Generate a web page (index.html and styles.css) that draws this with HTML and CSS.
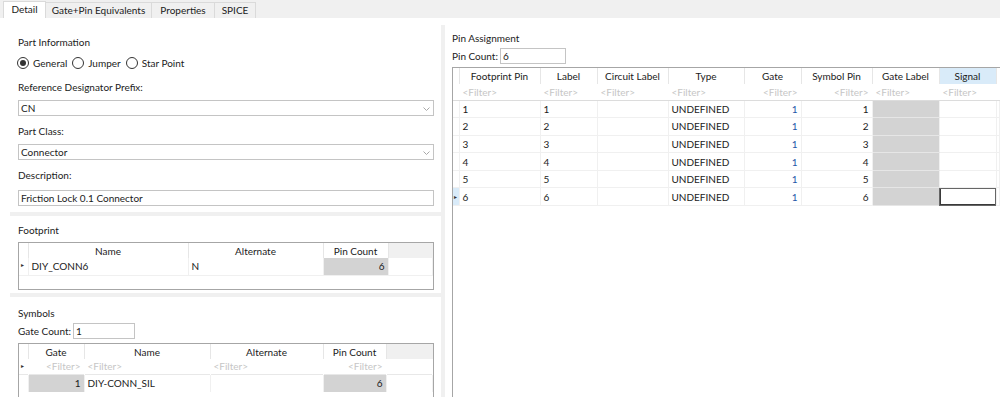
FILE: index.html
```html
<!DOCTYPE html>
<html lang="en">
<head>
    <meta charset="UTF-8">
    <title>Part Editor</title>
    <link rel="stylesheet" href="styles.css">
</head>
<body>
    <div class="tabs">
        <div class="tab tab-detail active">Detail</div>
        <div class="tab tab-equiv">Gate+Pin Equivalents</div>
        <div class="tab tab-props">Properties</div>
        <div class="tab tab-spice">SPICE</div>
    </div>

    <div class="content">
        <div class="left">
            <!-- part information -->
            <section class="group info">
                <div class="caption">Part Information</div>
                <div class="radios">
                    <span class="radio checked"></span><span class="radio-text">General</span>
                    <span class="radio"></span><span class="radio-text">Jumper</span>
                    <span class="radio"></span><span class="radio-text">Star Point</span>
                </div>
                <div class="field-label">Reference Designator Prefix:</div>
                <div class="combo">CN
                    <svg class="chevron" width="7" height="4" viewBox="0 0 7 4"><path d="M0.5 0.5 L3.5 3.5 L6.5 0.5" fill="none" stroke="#a8a8a8" stroke-width="1"/></svg>
                </div>
                <div class="field-label">Part Class:</div>
                <div class="combo">Connector
                    <svg class="chevron" width="7" height="4" viewBox="0 0 7 4"><path d="M0.5 0.5 L3.5 3.5 L6.5 0.5" fill="none" stroke="#a8a8a8" stroke-width="1"/></svg>
                </div>
                <div class="field-label">Description:</div>
                <div class="textbox">Friction Lock 0.1 Connector</div>
            </section>
            <div class="band"></div>

            <!-- footprint -->
            <section class="group footprint">
                <div class="caption">Footprint</div>
                <div class="grid small-grid fp-grid">
                    <table>
                        <colgroup>
                            <col class="c-rh"><col style="width:160px"><col style="width:135px"><col style="width:65px"><col>
                        </colgroup>
                        <tr class="head">
                            <th></th><th>Name</th><th>Alternate</th><th>Pin Count</th><th class="blank"></th>
                        </tr>
                        <tr class="row">
                            <td class="rh"><span class="marker">▸</span></td>
                            <td>DIY_CONN6</td><td>N</td><td class="ro num">6</td><td class="none"></td>
                        </tr>
                    </table>
                </div>
            </section>
            <div class="band"></div>

            <!-- symbols -->
            <section class="group symbols">
                <div class="caption">Symbols</div>
                <div class="count-row">
                    <span>Gate Count:</span>
                    <div class="textbox count-box">1</div>
                </div>
                <div class="grid small-grid sym-grid">
                    <table>
                        <colgroup>
                            <col class="c-rh"><col style="width:56px"><col style="width:126px"><col style="width:113px"><col style="width:63px"><col>
                        </colgroup>
                        <tr class="head">
                            <th></th><th>Gate</th><th>Name</th><th>Alternate</th><th>Pin Count</th><th class="blank"></th>
                        </tr>
                        <tr class="filter">
                            <td class="rh"><span class="marker">▸</span></td>
                            <td class="num">&lt;Filter&gt;</td><td>&lt;Filter&gt;</td><td>&lt;Filter&gt;</td><td class="num">&lt;Filter&gt;</td><td class="none"></td>
                        </tr>
                        <tr class="row">
                            <td class="rh"></td>
                            <td class="ro num">1</td><td>DIY-CONN_SIL</td><td></td><td class="ro num">6</td><td class="none"></td>
                        </tr>
                    </table>
                </div>
            </section>
        </div>

        <div class="splitter"></div>

        <div class="right">
            <div class="caption">Pin Assignment</div>
            <div class="count-row">
                <span>Pin Count:</span>
                <div class="textbox pin-box">6</div>
            </div>
            <div class="grid pin-grid">
                <table>
                    <colgroup>
                        <col style="width:6px"><col style="width:81px"><col style="width:57px"><col style="width:71px"><col style="width:76px"><col style="width:57px"><col style="width:71px"><col style="width:67px"><col style="width:57px"><col>
                    </colgroup>
                    <tr class="head">
                        <th></th><th>Footprint Pin</th><th>Label</th><th>Circuit Label</th><th>Type</th><th>Gate</th><th>Symbol Pin</th><th>Gate Label</th><th class="sorted">Signal</th><th class="none"></th>
                    </tr>
                    <tr class="filter">
                        <td class="rh"></td>
                        <td>&lt;Filter&gt;</td><td>&lt;Filter&gt;</td><td>&lt;Filter&gt;</td><td>&lt;Filter&gt;</td><td class="num">&lt;Filter&gt;</td><td class="num">&lt;Filter&gt;</td><td>&lt;Filter&gt;</td><td>&lt;Filter&gt;</td><td class="none"></td>
                    </tr>
                    <tr class="row">
                        <td class="rh"></td><td>1</td><td>1</td><td></td><td>UNDEFINED</td><td class="num gate">1</td><td class="num">1</td><td class="ro"></td><td></td><td class="none"></td>
                    </tr>
                    <tr class="row">
                        <td class="rh"></td><td>2</td><td>2</td><td></td><td>UNDEFINED</td><td class="num gate">1</td><td class="num">2</td><td class="ro"></td><td></td><td class="none"></td>
                    </tr>
                    <tr class="row">
                        <td class="rh"></td><td>3</td><td>3</td><td></td><td>UNDEFINED</td><td class="num gate">1</td><td class="num">3</td><td class="ro"></td><td></td><td class="none"></td>
                    </tr>
                    <tr class="row">
                        <td class="rh"></td><td>4</td><td>4</td><td></td><td>UNDEFINED</td><td class="num gate">1</td><td class="num">4</td><td class="ro"></td><td></td><td class="none"></td>
                    </tr>
                    <tr class="row">
                        <td class="rh"></td><td>5</td><td>5</td><td></td><td>UNDEFINED</td><td class="num gate">1</td><td class="num">5</td><td class="ro"></td><td></td><td class="none"></td>
                    </tr>
                    <tr class="row">
                        <td class="rh selected"><span class="marker">▸</span></td><td>6</td><td>6</td><td></td><td>UNDEFINED</td><td class="num gate">1</td><td class="num">6</td><td class="ro"></td><td class="current"></td><td class="none"></td>
                    </tr>
                </table>
            </div>
        </div>
    </div>
</body>
</html>
```

FILE: styles.css
```css
* {
    margin: 0;
    padding: 0;
    box-sizing: border-box;
}

body {
    font-family: Lato, "Noto Sans", sans-serif;
    font-size: 10px;
    color: #1b1b1b;
    background: white;
    width: 1000px;
    height: 397px;
    overflow: hidden;
}

/* tab strip */
.tabs {
    display: flex;
    align-items: flex-end;
    height: 18px;
    padding-left: 3px;
    background: #f0f0f0;
}

.tab {
    height: 16px;
    line-height: 15px;
    text-align: center;
    border: 1px solid #dadada;
    border-bottom: none;
    border-left: none;
    background: #f0f0f0;
    white-space: nowrap;
}

.tab.active {
    height: 17px;
    background: white;
    border-left: 1px solid #dadada;
}

.tab-detail { width: 43px; }
.tab-equiv { width: 106px; }
.tab-props { width: 63px; }
.tab-spice { width: 41px; }

/* main split */
.content {
    display: flex;
    height: 379px;
}

.left {
    width: 441px;
    display: flex;
    flex-direction: column;
    overflow: hidden;
}

.splitter {
    width: 4px;
    margin-top: 7px;
    background: #f0f0f0;
}

.right {
    flex: 1;
    padding: 13px 0 0 7px;
    overflow: hidden;
}

.group {
    flex-shrink: 0;
    padding-left: 18px;
    padding-right: 7px;
}

.band {
    flex-shrink: 0;
    height: 4px;
    margin-left: 10px;
    background: #f0f0f0;
}

.caption {
    line-height: 15px;
}

/* part information */
.info {
    padding-top: 17px;
    height: 194px;
}

.radios {
    display: flex;
    align-items: center;
    margin-top: 6px;
    margin-left: -1px;
    height: 13px;
}

.radio {
    width: 12px;
    height: 12px;
    border: 1px solid #333;
    border-radius: 50%;
    margin-right: 4px;
    display: flex;
    align-items: center;
    justify-content: center;
}

.radio.checked::after {
    content: "";
    width: 6px;
    height: 6px;
    border-radius: 50%;
    background: #333;
}

.radio-text {
    margin-right: 5px;
}

.field-label {
    line-height: 15px;
    margin-top: 11px;
}

.combo,
.textbox {
    position: relative;
    height: 16px;
    line-height: 14px;
    margin-top: 5px;
    padding-left: 2px;
    border: 1px solid #c4c4c4;
    background: white;
}

.combo + .field-label,
.textbox + .field-label {
    margin-top: 8px;
}

.info .textbox {
    margin-top: 7px;
}

.chevron {
    position: absolute;
    right: 3px;
    top: 6px;
}

/* footprint */
.footprint {
    height: 77px;
    padding-top: 7px;
}

.symbols {
    flex: 1;
    padding-top: 9px;
}

.count-row {
    display: flex;
    align-items: center;
    margin-top: 2px;
    gap: 2px;
}

.count-row .textbox {
    margin-top: 0;
}

.count-box {
    width: 62px;
}

.pin-box {
    width: 66px;
}

/* grids */
.grid {
    border: 1px solid #a6a6a6;
    overflow: hidden;
    background: white;
}

.grid table {
    border-collapse: collapse;
    table-layout: fixed;
    width: 100%;
}

.grid th,
.grid td {
    height: 15px;
    padding: 0 3px;
    white-space: nowrap;
    overflow: hidden;
    font-weight: normal;
    line-height: 14px;
    text-align: left;
}

.grid th {
    text-align: center;
    border-right: 1px solid #e6e6e6;
    background: white;
}

.grid th.blank {
    background: #f0f0f0;
    border-right: none;
}

.grid th.sorted {
    background: #d9ebf9;
}

.grid th.none,
.grid td.none {
    border: none;
}

.c-rh {
    width: 9px;
}

.grid td.rh {
    padding: 0;
    position: relative;
}

.marker {
    font-size: 6px;
    position: absolute;
    left: 2px;
    top: 4px;
    line-height: 6px;
    color: #333;
}

.grid .filter td {
    color: #c6c6c6;
    height: 16px;
    border-right: 1px solid transparent;
}

.grid td.num {
    text-align: right;
}

.grid td.ro {
    background: #d3d3d3;
}

.fp-grid {
    margin-top: 4px;
    height: 48px;
}

.fp-grid .row td {
    height: 17px;
    border-bottom: 1px solid #f0f0f0;
    border-right: 1px solid #f0f0f0;
}

.sym-grid {
    margin-top: 4px;
    height: 80px;
}

.sym-grid .filter td {
    height: 15px;
}

.sym-grid .row td {
    height: 18px;
    border-top: 1px solid #e8e8e8;
    border-right: 1px solid #f0f0f0;
}

/* pin assignment */
.pin-grid {
    margin-top: 3px;
    height: 340px;
    border-right: none;
}

.pin-grid th {
    height: 16px;
}

.pin-grid .filter td {
    border-bottom: 1px solid #dcdcdc;
}

.pin-grid .row td {
    height: 17.6px;
    border-bottom: 1px solid #f0f0f0;
    border-right: 1px solid #f0f0f0;
}

.pin-grid td.ro {
    border-bottom-color: #e6e6e6;
}

.pin-grid td.rh.selected {
    background: #d9ebf9;
}

.pin-grid td.rh .marker {
    left: 1px;
    top: 6px;
}

.gate {
    color: #2557a8;
}

.pin-grid td.current {
    box-shadow: inset 0 0 0 1px #3a3a3a;
    outline: 1px solid #666;
    outline-offset: -1px;
}
```
